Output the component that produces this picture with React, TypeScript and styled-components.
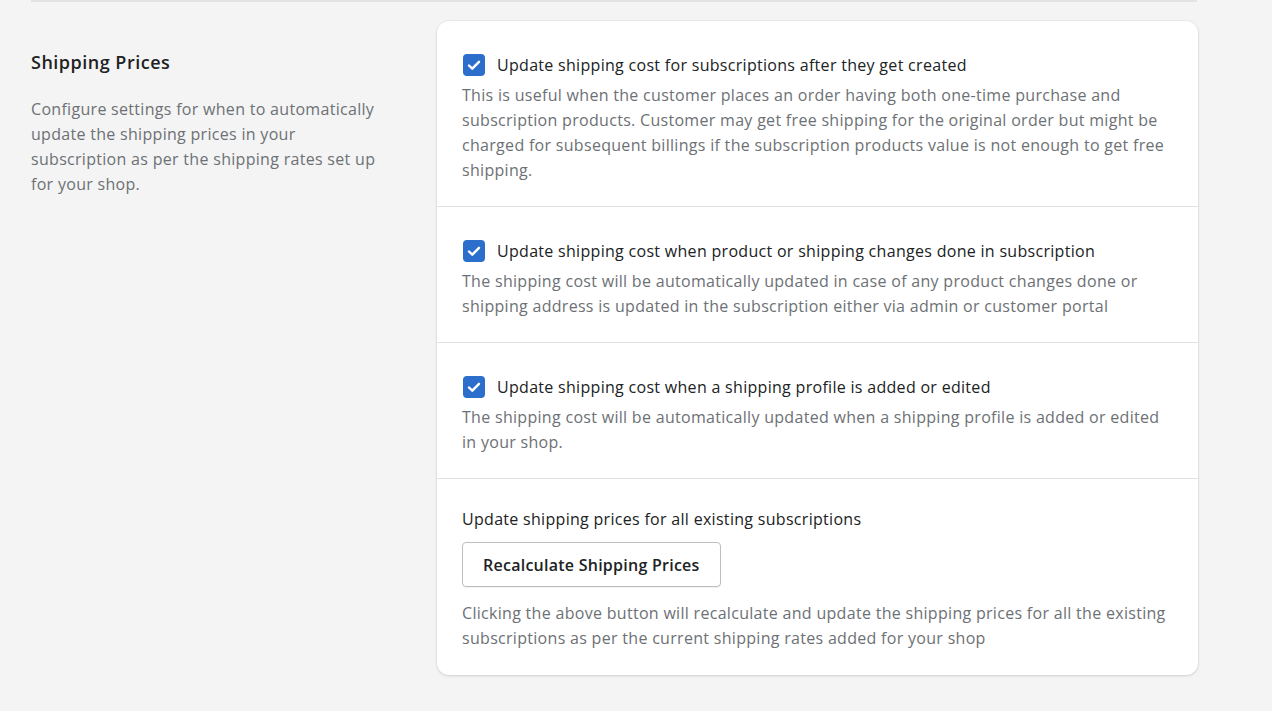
import React from 'react';
import styled, { createGlobalStyle } from 'styled-components';

const GlobalStyle = createGlobalStyle`
	html, body {
		margin: 0;
		padding: 0;
		background: #f4f4f4;
		font-family: 'Open Sans', 'Noto Sans', sans-serif;
		color: #202223;
	}
`;

const Page = styled.div`
	width: 1166px;
	margin-left: 31px;
	border-top: 2px solid #e3e3e3;
	padding-top: 19px;
	padding-bottom: 36px;
`;

const Layout = styled.div`
	display: grid;
	grid-template-columns: 375px 761px;
	column-gap: 31px;
	align-items: start;
`;

const Annotation = styled.div`
	padding-top: 29px;
	padding-right: 20px;
`;

const Title = styled.h2`
	margin: 0 0 23px;
	font-size: 18px;
	letter-spacing: 0.5px;
	line-height: 24px;
	font-weight: 600;
	color: #202223;
`;

const Muted = styled.p`
	margin: 0;
	font-size: 16px;
	letter-spacing: 0.3px;
	line-height: 25px;
	color: #6d7175;
`;

const Card = styled.div`
	background: #ffffff;
	border-radius: 12px;
	box-shadow: 0 0 0 1px rgba(0, 0, 0, 0.03), 0 1px 3px rgba(0, 0, 0, 0.12);
	overflow: hidden;
`;

const Section = styled.div<{ $top?: number; $bottom?: number }>`
	padding: ${({ $top }) => $top ?? 32}px 25px ${({ $bottom }) => $bottom ?? 23}px 25px;
	& + & {
		border-top: 1px solid #e3e3e3;
	}
`;

const CheckRow = styled.label`
	display: flex;
	align-items: center;
	gap: 12px;
	padding-left: 1px;
	margin-bottom: 6px;
`;

const Box = styled.span`
	display: inline-flex;
	align-items: center;
	justify-content: center;
	width: 22px;
	height: 22px;
	border-radius: 4px;
	background: #2c6ecb;
	flex-shrink: 0;
`;

const Label = styled.span`
	font-size: 16px;
	letter-spacing: 0.3px;
	line-height: 24px;
	color: #202223;
`;

const Plain = styled.div`
	font-size: 16px;
	letter-spacing: 0.3px;
	line-height: 24px;
	color: #202223;
	margin-bottom: 11px;
`;

const Button = styled.button`
	display: block;
	height: 45px;
	padding: 0 20px;
	border: 1px solid #babfc3;
	border-radius: 4px;
	background: #ffffff;
	font-family: inherit;
	font-size: 16px;
	letter-spacing: 0.25px;
	font-weight: 600;
	color: #202223;
	margin-bottom: 14px;
	box-shadow: 0 1px 0 rgba(0, 0, 0, 0.05);
`;

const Check = () => (
	<Box>
		<svg width="22" height="22" viewBox="0 0 22 22" fill="none">
			<path d="M6 11.5l3.3 3.2L16 7.8" stroke="#fff" strokeWidth="2.4" strokeLinecap="round" strokeLinejoin="round" />
		</svg>
	</Box>
);

const options = [
	{
		label: 'Update shipping cost for subscriptions after they get created',
		help: 'This is useful when the customer places an order having both one-time purchase and subscription products. Customer may get free shipping for the original order but might be charged for subsequent billings if the subscription products value is not enough to get free shipping.',
	},
	{
		label: 'Update shipping cost when product or shipping changes done in subscription',
		help: 'The shipping cost will be automatically updated in case of any product changes done or shipping address is updated in the subscription either via admin or customer portal',
	},
	{
		label: 'Update shipping cost when a shipping profile is added or edited',
		help: 'The shipping cost will be automatically updated when a shipping profile is added or edited in your shop.',
	},
];

export default function App() {
	return (
		<>
			<GlobalStyle />
			<Page>
				<Layout>
					<Annotation>
						<Title>Shipping Prices</Title>
						<Muted>
							Configure settings for when to automatically update the shipping prices in your subscription as per the shipping rates set up for your shop.
						</Muted>
					</Annotation>
					<Card>
						{options.map((o) => (
							<Section key={o.label}>
								<CheckRow>
									<Check />
									<Label>{o.label}</Label>
								</CheckRow>
								<Muted>{o.help}</Muted>
							</Section>
						))}
						<Section $top={28} $bottom={24}>
							<Plain>Update shipping prices for all existing subscriptions</Plain>
							<Button>Recalculate Shipping Prices</Button>
							<Muted>
								Clicking the above button will recalculate and update the shipping prices for all the existing subscriptions as per the current shipping rates added for your shop
							</Muted>
						</Section>
					</Card>
				</Layout>
			</Page>
		</>
	);
}
